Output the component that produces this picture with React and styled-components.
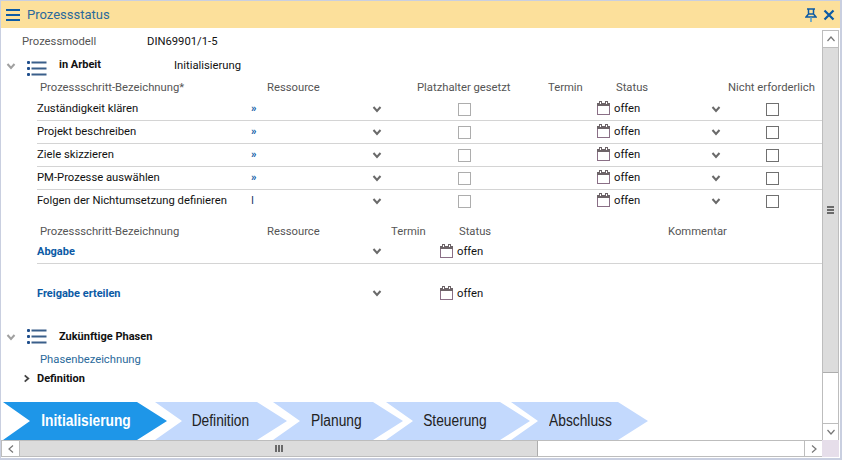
import styled, { createGlobalStyle } from "styled-components";

const stepsInWork = [
    { name: "Zuständigkeit klären", marker: "»" },
    { name: "Projekt beschreiben", marker: "»" },
    { name: "Ziele skizzieren", marker: "»" },
    { name: "PM-Prozesse auswählen", marker: "»" },
    { name: "Folgen der Nichtumsetzung definieren", marker: "I" },
];

const phases = [
    { label: "Initialisierung", width: 164, overlap: 0, shift: 1, active: true },
    { label: "Definition", width: 132, overlap: 12, shift: -1 },
    { label: "Planung", width: 130, overlap: 14, shift: -2 },
    { label: "Steuerung", width: 144, overlap: 17, shift: -3 },
    { label: "Abschluss", width: 137, overlap: 19, shift: 1 },
];

function ListIcon() {
    return (
        <svg width="22" height="18" viewBox="0 0 22 18">
            <rect x="2" y="2" width="3" height="3" rx="1" fill="#1f4e8c" />
            <rect x="2" y="8" width="3" height="3" rx="1" fill="#1f4e8c" />
            <rect x="2" y="14" width="3" height="3" rx="1" fill="#1f4e8c" />
            <rect x="6.5" y="2.5" width="15" height="2" fill="#3a5f8a" />
            <rect x="6.5" y="8.5" width="15" height="2" fill="#3a5f8a" />
            <rect x="6.5" y="14.5" width="15" height="2" fill="#3a5f8a" />
        </svg>
    );
}

function Chevron({ dir = "down", size = 10, color = "#6a6a6a", weight = 2 }) {
    const d = {
        down: "M1.5 3 L5 7 L8.5 3",
        up: "M1.5 7 L5 3 L8.5 7",
        left: "M7 1.5 L3 5 L7 8.5",
        right: "M3 1.5 L7 5 L3 8.5",
    }[dir];
    return (
        <svg width={size} height={size} viewBox="0 0 10 10">
            <path d={d} fill="none" stroke={color} strokeWidth={weight} />
        </svg>
    );
}

function CalendarIcon() {
    return (
        <svg width="13" height="14" viewBox="0 0 13 14">
            <rect x="0.5" y="2.5" width="12" height="11" fill="#fff" stroke="#8a6f86" />
            <rect x="0" y="2" width="13" height="3" fill="#6d6468" />
            <rect x="2.5" y="0.5" width="2" height="3" fill="#fff" stroke="#6d6468" strokeWidth="1" />
            <rect x="8.5" y="0.5" width="2" height="3" fill="#fff" stroke="#6d6468" strokeWidth="1" />
        </svg>
    );
}

function StatusCell() {
    return (
        <StatusBox>
            <CalendarIcon />
            <span>offen</span>
        </StatusBox>
    );
}

export default function App() {
    return (
        <Window>
            <GlobalStyle />
            <TitleBar>
                <TitleLeft>
                    <Burger>
                        <span />
                        <span />
                        <span />
                    </Burger>
                    <Title>Prozessstatus</Title>
                </TitleLeft>
                <TitleActions>
                    <svg width="12" height="14" viewBox="0 0 12 14">
                        <path d="M2 1 H10 M3.5 1 V6 M8.5 1 V6 M1 9 L3.5 6 H8.5 L11 9 Z" fill="none" stroke="#0b5aa5" strokeWidth="1.5" />
                        <path d="M6 9 V14" stroke="#4a9ad0" strokeWidth="1.5" />
                    </svg>
                    <svg width="12" height="12" viewBox="0 0 12 12">
                        <path d="M1.5 1.5 L10.5 10.5 M10.5 1.5 L1.5 10.5" stroke="#0b5aa5" strokeWidth="2.2" />
                    </svg>
                </TitleActions>
            </TitleBar>

            <Middle>
                <Content>
                    <ModelRow>
                        <ModelLabel>Prozessmodell</ModelLabel>
                        <span>DIN69901/1-5</span>
                    </ModelRow>

                    <SectionHead>
                        <Chevron color="#a0a0a0" />
                        <IconSlot $shift={5}><ListIcon /></IconSlot>
                        <SectionName>in Arbeit</SectionName>
                        <SectionValue>Initialisierung</SectionValue>
                    </SectionHead>

                    <HeaderGrid $columns="227px 150px 131px 68px 112px auto">
                        <span>Prozessschritt-Bezeichnung*</span>
                        <span>Ressource</span>
                        <span>Platzhalter gesetzt</span>
                        <span>Termin</span>
                        <span>Status</span>
                        <span>Nicht erforderlich</span>
                    </HeaderGrid>

                    {stepsInWork.map((step, i) => (
                        <StepRow key={step.name} $last={i === stepsInWork.length - 1}>
                            <span>{step.name}</span>
                            <Marker $plain={step.marker === "I"}>{step.marker}</Marker>
                            <ChevronCell $drop={2}><Chevron /></ChevronCell>
                            <CheckCell $pad={74}><CheckBox $disabled /></CheckCell>
                            <StatusCell />
                            <ChevronCell $drop={2}><Chevron /></ChevronCell>
                            <CheckCell $pad={43}><CheckBox /></CheckCell>
                        </StepRow>
                    ))}

                    <HeaderGrid $columns="227px 124px 68px 209px auto" $top={11} $height={15}>
                        <span>Prozessschritt-Bezeichnung</span>
                        <span>Ressource</span>
                        <span>Termin</span>
                        <span>Status</span>
                        <span>Kommentar</span>
                    </HeaderGrid>
                    <GateRow $line>
                        <GateName>Abgabe</GateName>
                        <ChevronCell><Chevron /></ChevronCell>
                        <StatusCell />
                    </GateRow>
                    <GateRow $top={17}>
                        <GateName>Freigabe erteilen</GateName>
                        <ChevronCell><Chevron /></ChevronCell>
                        <StatusCell />
                    </GateRow>

                    <SectionHead $top={19}>
                        <Chevron color="#a0a0a0" />
                        <IconSlot $shift={-2}><ListIcon /></IconSlot>
                        <SectionName $center>Zukünftige Phasen</SectionName>
                    </SectionHead>
                    <PhaseHeader>Phasenbezeichnung</PhaseHeader>
                    <PhaseRow>
                        <Chevron dir="right" size={9} color="#444" />
                        <span>Definition</span>
                    </PhaseRow>

                    <PhaseBar>
                        {phases.map((p) => (
                            <Phase key={p.label} $width={p.width} $overlap={p.overlap} $shift={p.shift} $active={p.active}>
                                <PhaseLabel>{p.label}</PhaseLabel>
                            </Phase>
                        ))}
                    </PhaseBar>
                </Content>

                <VScroll>
                    <ScrollButton><Chevron dir="up" color="#777" weight={1.2} /></ScrollButton>
                    <VTrack>
                        <VThumb>
                            <GripV><i /><i /><i /></GripV>
                        </VThumb>
                    </VTrack>
                    <ScrollButton><Chevron color="#777" weight={1.2} /></ScrollButton>
                </VScroll>
            </Middle>

            <BottomRow>
                <HScroll>
                    <ScrollButton $wide><Chevron dir="left" color="#777" weight={1.2} /></ScrollButton>
                    <HTrack>
                        <HThumb>
                            <GripH><i /><i /><i /></GripH>
                        </HThumb>
                    </HTrack>
                    <ScrollButton $wide><Chevron dir="right" color="#777" weight={1.2} /></ScrollButton>
                </HScroll>
                <Corner />
            </BottomRow>
        </Window>
    );
}

const GlobalStyle = createGlobalStyle`
    html, body {
        margin: 0;
        padding: 0;
        background: #fff;
    }
    body {
        font-family: Roboto, "Liberation Sans", sans-serif;
        font-size: 11.25px;
        color: #111;
    }
`;

const Window = styled.div`
    width: 842px;
    height: 460px;
    box-sizing: border-box;
    border: 1px solid #c9cfe0;
    border-width: 1px 2px 2px 1px;
    display: flex;
    flex-direction: column;
    overflow: hidden;
    background: #fff;
`;

const TitleBar = styled.div`
    height: 27px;
    flex: none;
    background: #fce09b;
    display: flex;
    align-items: center;
    justify-content: space-between;
    padding: 0 5px 0 5px;
`;

const TitleLeft = styled.div`
    display: flex;
    align-items: center;
    gap: 7px;
`;

const Burger = styled.div`
    width: 14px;
    display: flex;
    flex-direction: column;
    gap: 3px;

    span {
        height: 2px;
        background: #0b5aa5;
    }
`;

const Title = styled.div`
    font-size: 13px;
    color: #2b6a9b;
`;

const TitleActions = styled.div`
    display: flex;
    align-items: center;
    gap: 6px;
`;

const Middle = styled.div`
    flex: 1;
    min-height: 0;
    display: flex;
`;

const Content = styled.div`
    flex: 1;
    min-width: 0;
    overflow: hidden;
`;

const ModelRow = styled.div`
    display: flex;
    height: 26px;
    align-items: center;
    padding-left: 21px;
`;

const ModelLabel = styled.span`
    width: 125px;
    color: #555;
`;

const SectionHead = styled.div`
    display: flex;
    align-items: center;
    height: 23px;
    padding-left: 5px;
    margin-top: ${(p) => p.$top || 0}px;

    > svg:first-child {
        margin-right: 9px;
    }
`;

const IconSlot = styled.div`
    display: flex;
    margin-top: ${(p) => p.$shift}px;
`;

const SectionName = styled.span`
    font-weight: 700;
    font-size: 11px;
    margin-left: 12px;
    width: ${(p) => (p.$center ? "auto" : "115px")};
    margin-top: ${(p) => (p.$center ? "0" : "-3px")};
`;

const SectionValue = styled.span`
    margin-top: -1px;
`;

const HeaderGrid = styled.div`
    display: grid;
    grid-template-columns: ${(p) => p.$columns};
    height: ${(p) => p.$height || 21}px;
    align-items: center;
    padding-left: 39px;
    margin-top: ${(p) => p.$top || 0}px;
    color: #555;
    white-space: nowrap;
`;

const StepRow = styled.div`
    display: grid;
    grid-template-columns: 213px 120px 14px 213px 112px 14px auto;
    height: 23px;
    box-sizing: border-box;
    align-items: center;
    margin-left: 36px;
    padding-bottom: 2px;
    white-space: nowrap;
    border-bottom: 1px solid ${(p) => (p.$last ? "transparent" : "#d4d4d4")};
`;

const Marker = styled.span`
    color: ${(p) => (p.$plain ? "#1a3c6a" : "#0b5aa5")};
    font-weight: ${(p) => (p.$plain ? 400 : 700)};
    font-size: 11px;
    padding-left: 1px;
`;

const ChevronCell = styled.div`
    display: flex;
    justify-content: center;
    margin-top: ${(p) => p.$drop || 0}px;
`;

const CheckCell = styled.div`
    display: flex;
    padding-left: ${(p) => p.$pad}px;
    margin-top: 3px;
`;

const CheckBox = styled.div`
    width: 13px;
    height: 13px;
    flex: none;
    box-sizing: border-box;
    background: #fff;
    border: 1px solid ${(p) => (p.$disabled ? "#adadad" : "#707070")};
`;

const StatusBox = styled.div`
    display: flex;
    align-items: center;
    gap: 4px;
`;

const GateRow = styled.div`
    display: grid;
    grid-template-columns: 333px 14px 56px auto;
    height: 25px;
    box-sizing: border-box;
    align-items: center;
    margin-left: 36px;
    margin-top: ${(p) => p.$top || 0}px;
    border-bottom: 1px solid ${(p) => (p.$line ? "#d4d4d4" : "transparent")};

    ${StatusBox} {
        grid-column: 4;
    }
`;

const GateName = styled.span`
    color: #0b5aa5;
    font-weight: 700;
    font-size: 11px;
`;

const PhaseHeader = styled.div`
    height: 20px;
    margin-top: 1px;
    display: flex;
    align-items: center;
    padding-left: 39px;
    color: #2b6a9b;
`;

const PhaseRow = styled.div`
    height: 18px;
    display: flex;
    align-items: center;
    gap: 6px;
    padding-left: 21px;
    font-weight: 700;
    font-size: 11px;
`;

const PhaseBar = styled.div`
    display: flex;
    margin-top: 15px;
    padding-left: 2px;
`;

const Phase = styled.div`
    width: ${(p) => p.$width}px;
    height: 38px;
    flex: none;
    margin-left: ${(p) => -p.$overlap}px;
    display: flex;
    align-items: center;
    justify-content: center;
    box-sizing: border-box;
    background: ${(p) => (p.$active ? "#1e96e8" : "#c3d9fd")};
    color: ${(p) => (p.$active ? "#fff" : "#222")};
    font-weight: ${(p) => (p.$active ? 700 : 400)};
    clip-path: polygon(0 0, calc(100% - 30px) 0, 100% 50%, calc(100% - 30px) 100%, 0 100%, 27px 50%);

    span {
        margin-left: ${(p) => p.$shift * 2}px;
    }
`;

const PhaseLabel = styled.span`
    display: inline-block;
    font-family: "Liberation Sans", Arial, sans-serif;
    font-size: 16px;
    transform: scaleX(0.86);
`;

const VScroll = styled.div`
    width: 17px;
    flex: none;
    margin: 2px 1px 0 0;
    display: flex;
    flex-direction: column;
    border-left: 1px solid #bdbdbd;
    border-right: 1px solid #bdbdbd;
    border-top: 1px solid #bdbdbd;
    box-sizing: border-box;
`;

const ScrollButton = styled.div`
    flex: none;
    width: ${(p) => (p.$wide ? "17px" : "auto")};
    height: ${(p) => (p.$wide ? "auto" : "16px")};
    display: flex;
    align-items: center;
    justify-content: center;
    background: #fff;
`;

const VTrack = styled.div`
    flex: 1;
    background: #fff;
    border-top: 1px solid #bdbdbd;
    border-bottom: 1px solid #bdbdbd;
`;

const VThumb = styled.div`
    height: 324px;
    background: #dcdcdc;
    border-bottom: 1px solid #adadad;
    display: flex;
    align-items: center;
    justify-content: center;
`;

const GripV = styled.div`
    display: flex;
    flex-direction: column;
    gap: 1px;

    i {
        display: block;
        width: 7px;
        height: 2px;
        background: #6a6a6a;
    }
`;

const BottomRow = styled.div`
    height: 17px;
    flex: none;
    display: flex;
    margin-bottom: 1px;
`;

const HScroll = styled.div`
    flex: 1;
    display: flex;
    box-sizing: border-box;
    border: 1px solid #bdbdbd;
    border-right: 0;
`;

const HTrack = styled.div`
    flex: 1;
    background: #fff;
    border-left: 1px solid #bdbdbd;
    border-right: 1px solid #bdbdbd;
`;

const HThumb = styled.div`
    width: 517px;
    height: 100%;
    background: #dcdcdc;
    border-right: 1px solid #adadad;
    display: flex;
    align-items: center;
    justify-content: center;
`;

const GripH = styled.div`
    display: flex;
    gap: 1px;

    i {
        display: block;
        width: 2px;
        height: 7px;
        background: #6a6a6a;
    }
`;

const Corner = styled.div`
    width: 17px;
    margin-right: 1px;
    background: #e6deea;
`;
